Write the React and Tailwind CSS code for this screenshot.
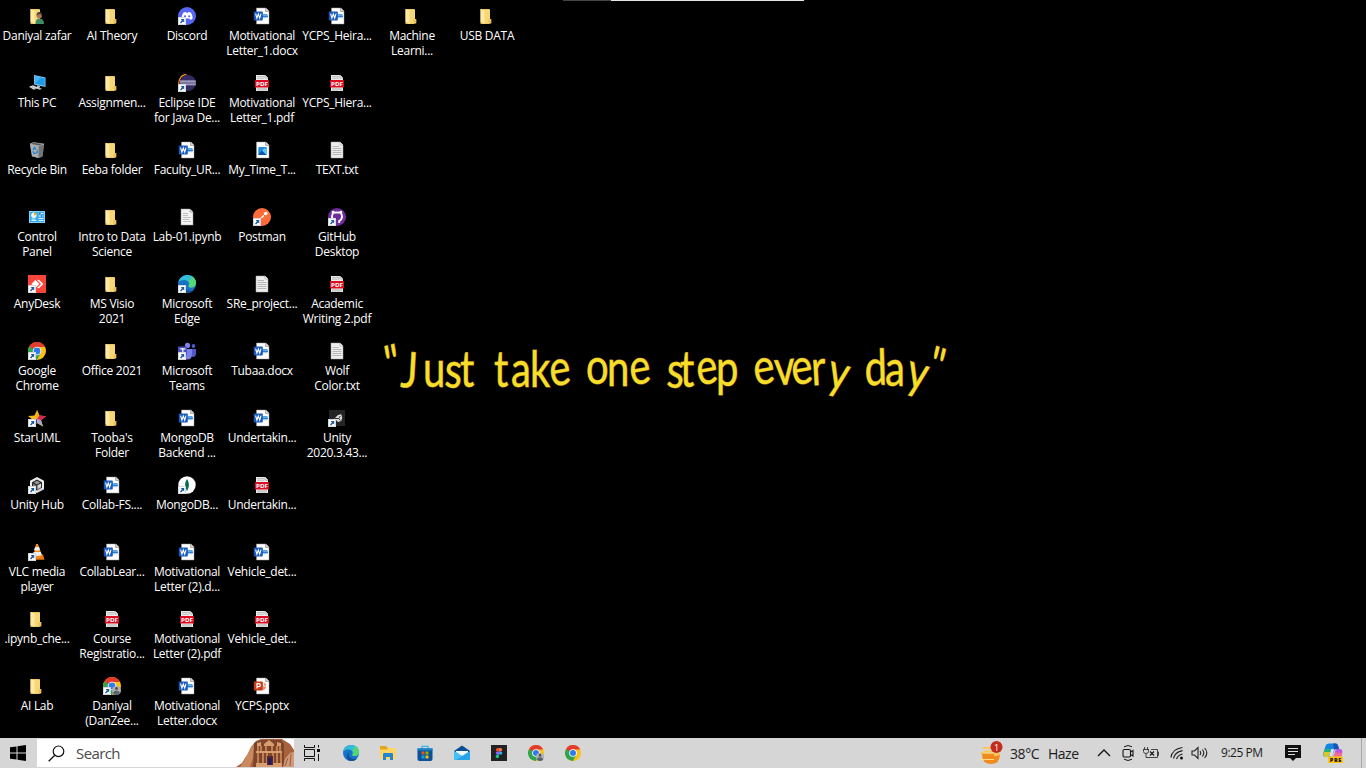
import React from "react";

const Svg = ({ children, className = "h-[18px] w-[18px]", box = "0 0 18 18" }) => (
  <svg viewBox={box} className={`block shrink-0 ${className}`}>
    {children}
  </svg>
);

const Shortcut = () => (
  <g>
    <rect x="0" y="10" width="8" height="8" fill="#fff" />
    <rect x="0.4" y="10.4" width="7.2" height="7.2" fill="none" stroke="#b9c0c8" strokeWidth="0.6" />
    <path d="M2.6 12h3.6v3.6L5 14.4 3 16.6 2 15.8 3.9 13.3z" fill="#1f5aa0" />
  </g>
);

const FolderShape = () => (
  <g>
    <path d="M2.5 2h9v15h-9z" fill="#e9b94f" />
    <path d="M6 2.5h6v9.500h1.2v4.6H6z" fill="#f7d774" />
    <path d="M10.5 12.3h2.7v3.4h-2.7z" fill="#edbf58" />
    <path d="M2.5 2 6.5 3.2V17L2.5 15.2z" fill="#fde9a6" />
  </g>
);

const ChromeShape = () => (
  <g>
    <circle cx="9" cy="9" r="9" fill="#fbc116" />
    <path d="M1.2 4.5A9 9 0 0 1 16.8 4.5L17 5H9L5 10.8z" fill="#e33b2e" />
    <path d="M1.2 4.5A9 9 0 0 0 8.8 18l4-7H5z" fill="#2da44e" />
    <path d="M1.2 4.5 5.1 11.2 9 9z" fill="#2da44e" />
    <circle cx="9" cy="9" r="4.3" fill="#fff" />
    <circle cx="9" cy="9" r="3.4" fill="#2f7cf0" />
  </g>
);

const Avatar = () => (
  <g>
    <circle cx="13.5" cy="13.5" r="4.5" fill="#aab2b9" />
    <path d="M9.900 16.2q.7-2.400 3.600-2.400t3.600 2.400q-3.400 3.400-7.200 0z" fill="#59636e" />
    <circle cx="13.500" cy="12" r="1.500" fill="#8a6656" />
    <path d="M12 11.600q1.500-2.800 3 0z" fill="#2f2f34" />
  </g>
);

const EdgeShape = () => (
  <g>
    <circle cx="9" cy="9" r="9" fill="#1773c8" />
    <path d="M.3 7.6C1.4 2.3 6-.2 10 .1c5 .3 8 4 8 7.7 0 3-2 4.7-5 4.7-2.500 0-3-1.200-2.200-2.300C12 7.500 9 4.500 5.200 5 2.500 5.300.8 6.600.3 7.600z" fill="#31bcdc" />
    <path d="M13 1.200c3.200 1.400 5 3.800 5 6.600 0 3-2 4.700-5 4.700-2.500 0-3-1.200-2.200-2.300 1-2 .8-3.400-.3-4.600C12 5 13.500 4 13 1.200z" fill="#5bdc5e" opacity="0.85" />
    <path d="M6.500 8.300C5.200 13 9 17.600 16 14.800 13.800 18 9.800 18.600 7.200 17.600 3.800 16.200 3.500 10.500 6.500 8.300z" fill="#124f98" />
  </g>
);

const DocPage = ({ x = 3.500 }) => (
  <g>
    <path d={`M${x} 1H13l3 3v13H${x}z`} fill="#fff" stroke="#9a9a9a" strokeWidth="0.5" />
    <path d="M12.600 1v3.400H16" fill="#ddd" stroke="#777" strokeWidth="0.6" />
  </g>
);

const icons = {
  folder: <FolderShape />,
  user: (
    <g>
      <FolderShape />
      <path d="M7.500 17q0-5 3.600-5.400Q16 12 16 17z" fill="#3f8b67" />
      <circle cx="11.300" cy="8.800" r="2.600" fill="#a9795b" />
      <path d="M8.600 9q-.4-4 2.700-4t2.700 4l-1.100-1.600-2.900-.2z" fill="#4c4033" />
    </g>
  ),
  pc: (
    <g>
      <path d="M6 1 17.500 3.500V13L6 10.500z" fill="#8ed2f7" />
      <path d="M6.700 2 16.800 4.200v7.800L6.700 9.800z" fill="#1e9bea" />
      <path d="M6.700 2 13 3.400 6.700 9.800z" fill="#45b5f5" />
      <path d="m9 11.300 3 .8-.4 1.800 2.400.7-2 1.200-4.500-1.200 1.300-.7z" fill="#b7c1c8" />
      <path d="m1 12.800 4-1.500 4.800 2.200-4 2.200z" fill="#e5e8ea" />
      <path d="m2.500 12.900 5 2.100M4 12.300l4.500 2" stroke="#88949d" strokeWidth="0.5" />
    </g>
  ),
  bin: (
    <g>
      <path d="M2 3 5.500 1.500 16 3 14.500 15.500 10.500 17 4 15.300z" fill="#929699" />
      <path d="M2 3 10.800 4.800 10.500 17 4 15.300z" fill="#aaaeb1" />
      <path d="M10.800 4.800 16 3 14.500 15.500 10.500 17z" fill="#707477" />
      <path d="M2 3 5.500 1.500 16 3l-5.200 1.800z" fill="#55595c" stroke="#c4c8cb" strokeWidth="0.5" />
      <path d="m5 9 1.500-2.500L8 8.500M5 10.300l1 2h1.600M9 9.300l.3 2-1.200 1.200" fill="none" stroke="#1d83d8" strokeWidth="1.300" />
    </g>
  ),
  control: (
    <g>
      <path d="M1 3h16v12H1z" fill="#7fd1f8" />
      <path d="M2 4h14v10H2z" fill="#36a9e8" />
      <circle cx="5.900" cy="7.300" r="2.700" fill="#e8f8ff" />
      <path d="M5.900 7.300V4.600a2.700 2.700 0 0 1 2.700 2.700z" fill="#f5a623" />
      <path d="M10.500 5.500h5M10.500 8h5M10.500 10.500h5M3.500 11h4M3.500 12.500h5M10.500 12.500h5" stroke="#d7f3ff" strokeWidth="1" />
      <path d="M11 5.500h1.500M13 8h1.500" stroke="#1267b5" />
    </g>
  ),
  anydesk: (
    <g>
      <path d="M0 0h18v18H0z" fill="#fb453b" />
      <path d="m3.400 9 4-4 4 4-4 4z" fill="#fff" />
      <path d="m9.500 5 4 4-4 4M10.800 5.300 14.500 9l-3.700 3.700" fill="none" stroke="#fff" strokeWidth="1.200" />
      <path d="m9 5.500 3.500 3.500L9 12.500" fill="none" stroke="#fb453b" strokeWidth="0.8" />
      <Shortcut />
    </g>
  ),
  chrome: <g><ChromeShape /><Shortcut /></g>,
  chromeUser: <g><ChromeShape /><Avatar /><Shortcut /></g>,
  star: (
    <g>
      <path d="M9 1 11.400 6.600 18 7.200 13 11.300 15 17.500 9 14 4 17 5 11 0 7 6.500 6.500z" fill="#f5b91c" />
      <path d="M9 1 11.400 6.600 9 10z" fill="#f8a329" />
      <path d="M11.400 6.600 18 7.200 13 11.300 9 10z" fill="#d52652" />
      <path d="M13 11.300 15 17.500 9 14V10z" fill="#aaa9bd" />
      <path d="M9 10v4L5 17l0-6z" fill="#5a36b3" />
      <Shortcut />
    </g>
  ),
  unityHub: (
    <g>
      <path d="M9 1 16 4.700v8.600L9 17 2 13.300V4.700z" fill="#eee" />
      <path d="M9 3.500 14 6.200v5.600L9 14.500 4 11.800V6.200z" fill="#292929" />
      <path d="m9 4.800 3.200 1.800L9 8.400 5.800 6.600z" fill="#999" />
      <path d="m9.600 9.300 3.400-1.800v3.700l-3.400 1.900z" fill="#ddd" />
      <path d="m8.400 9.300-3.400-1.800v3.700l3.400 1.900z" fill="#777" />
      <path d="m9 9.500 7 3.800L9 17z" fill="#b4b4b4" opacity="0.45" />
      <Shortcut />
    </g>
  ),
  vlc: (
    <g>
      <path d="m3 12.500 12-1 1.500 5.300H4z" fill="#e9740b" />
      <path d="m8 1h2l4.500 12.800q-4.500 3.200-9.500 0z" fill="#f48b18" />
      <path d="m7.100 4h3.900l1 3q-3 1.500-6 0zM5.600 9h7.200l1 3q-5 2-9.200 0z" fill="#eee" />
      <Shortcut />
    </g>
  ),
  discord: (
    <g>
      <circle cx="9" cy="9" r="9" fill="#5865f2" />
      <path d="M5.500 5.500 7.800 5l.5.8h1.600l.5-.8 2.300.5c1.500 2 2 4 1.800 6.200-1 .8-1.800 1-2.500 1.100l-.7-1.200H7l-.7 1.200c-1-.2-1.800-.6-2.500-1.100-.2-2.500.5-4.500 1.700-6.200z" fill="#fff" />
      <circle cx="7" cy="9.300" r="1.100" fill="#5865f2" />
      <circle cx="11.200" cy="9.300" r="1.100" fill="#5865f2" />
      <Shortcut />
    </g>
  ),
  eclipse: (
    <g>
      <path d="M8.500.3Q.8 1.500.7 10" fill="none" stroke="#f59018" strokeWidth="1.300" />
      <circle cx="9.900" cy="9" r="8" fill="#332b62" />
      <path d="M2 6.500h15.600l.3 1.200H1.900zM1.900 8.400H18v1.200H1.900zM2 10.300h15.800v1H2.300z" fill="#c6c4de" />
      <Shortcut />
    </g>
  ),
  word: (
    <g>
      <DocPage />
      <path d="M9 7h5.500v1.500H9z" fill="#4ba7e7" />
      <path d="M9 8.500h6v1.500H9z" fill="#2b7cd3" />
      <path d="M9 10h5.500v1.200H9z" fill="#a3c8ef" />
      <rect x="0.800" y="4.500" width="9" height="9" rx="0.800" fill="#185abd" />
      <path d="m2.600 6.700 1.300 4.500 1.400-4.200 1.400 4.200L8 6.700" fill="none" stroke="#fff" strokeWidth="1.100" />
    </g>
  ),
  ppt: (
    <g>
      <DocPage />
      <path d="M9.500 5.500a3.700 3.700 0 1 1 0 7.400z" fill="#f18e70" />
      <path d="M10.500 5.500v3.600h3.600" fill="none" stroke="#fff" strokeWidth="0.800" />
      <rect x="0.800" y="4.500" width="9" height="9" rx="0.800" fill="#c43e1c" />
      <path d="M4 11.600V6.700h1.700q1.700 0 1.700 1.500t-1.700 1.500H4" fill="none" stroke="#fff" strokeWidth="1.200" />
    </g>
  ),
  pdf: (
    <g>
      <path d="M3 1h9l3 3v13H3z" fill="#ececec" />
      <path d="M4 2.500h7M4 4.200h7M4 14.800h10M4 16h10" stroke="#aaa" strokeWidth="0.700" />
      <path d="M12 1v3h3" fill="#fff" stroke="#777" strokeWidth="0.500" />
      <rect x="2" y="6" width="14" height="7.500" rx="0.600" fill="#dc0b20" />
      <text x="3" y="11.600" fontSize="5.200" fontWeight="700" fontFamily="Open Sans, sans-serif" fill="#fff" textLength="12" lengthAdjust="spacingAndGlyphs">PDF</text>
    </g>
  ),
  image: (
    <g>
      <DocPage />
      <rect x="5.300" y="6" width="8.500" height="8" rx="0.800" fill="#238be0" />
      <path d="m5.300 13.500 3.700-4 4.500 4.500H6z" fill="#0e55a7" />
      <path d="m9 9.500 3-2.600 1.800 2.200v4.900z" fill="#66c7f5" />
    </g>
  ),
  txt: (
    <g>
      <path d="M3 1h9l3 3v13H3z" fill="#eee" stroke="#aaa" strokeWidth="0.500" />
      <path d="M12 1v3h3" fill="#fff" stroke="#888" strokeWidth="0.500" />
      <path d="M4.500 5.500h6.500M4.500 7.500h9M4.500 9.500h9M4.500 11.500h9M4.500 13.500h9" stroke="#aaa" strokeWidth="0.800" />
    </g>
  ),
  notebook: (
    <g>
      <path d="M3 1h9l3 3v13H3z" fill="#f3f3f3" stroke="#999" strokeWidth="0.500" />
      <path d="M12 1v3h3" fill="#ddd" stroke="#777" strokeWidth="0.500" />
      <path d="M5 5.500h5M5 7.500h5M5 9.500h8M5 11.500h6M5 13.500h8" stroke="#b5b5b5" strokeWidth="0.800" />
    </g>
  ),
  edge: <g><EdgeShape /><Shortcut /></g>,
  teams: (
    <g>
      <circle cx="9.500" cy="3.400" r="2.600" fill="#7b83eb" />
      <circle cx="15.500" cy="4" r="1.900" fill="#5059c9" />
      <path d="M12 7h6v5.500q-1 3-4 2.500z" fill="#5059c9" />
      <path d="M6 7h8v6q-.5 4.500-4.500 4.500T5 13z" fill="#7b83eb" />
      <rect x="0" y="4.500" width="9" height="9" rx="0.800" fill="#4b53bc" />
      <path d="M2.300 6.800h5M4.800 6.800v5" stroke="#fff" strokeWidth="1.200" />
      <Shortcut />
    </g>
  ),
  mongo: (
    <g>
      <circle cx="9" cy="9" r="8.700" fill="#fff" />
      <path d="M9 3Q13 9 9 14.500 5 9 9 3z" fill="#10744e" />
      <path d="M9 4v11" stroke="#0b5238" strokeWidth="0.500" />
      <Shortcut />
    </g>
  ),
  postman: (
    <g>
      <circle cx="9" cy="9" r="9" fill="#ff6c37" />
      <path d="m5 12 5-4.500 1.200 1.300z" fill="#fff" />
      <circle cx="12.800" cy="5.500" r="1.800" fill="#fff" />
      <path d="m7 11 5-5M5 12.500h3" stroke="#fff" strokeWidth="1" />
      <Shortcut />
    </g>
  ),
  github: (
    <g>
      <circle cx="9" cy="9" r="9" fill="#6e2c9d" />
      <path d="M6.800 15v-2.200Q4 12 4 8.600 4 7 4.800 6L4.700 3.700 7 4.700q2-.5 4 0l2.300-1L13.200 6q.8 1 .8 2.600 0 3.400-2.800 4.200V15" fill="none" stroke="#fff" strokeWidth="1.900" strokeLinejoin="round" />
      <Shortcut />
    </g>
  ),
  unity: (
    <g>
      <path d="M1 1h16v16H1z" fill="#242424" />
      <path d="m6.500 9.500 3.500-3.500 3.200-.8 1 3.300-1 3.500-3.200 1z" fill="#ddd" />
      <path d="M7 9.500h3.800M10.800 9.500l1.500-2.500M10.800 9.500l1.500 2" fill="none" stroke="#333" strokeWidth="1" />
      <Shortcut />
    </g>
  ),
};

const columns = [
  [
    ["user", "Daniyal zafar"],
    ["pc", "This PC"],
    ["bin", "Recycle Bin"],
    ["control", "Control", "Panel"],
    ["anydesk", "AnyDesk"],
    ["chrome", "Google", "Chrome"],
    ["star", "StarUML"],
    ["unityHub", "Unity Hub"],
    ["vlc", "VLC media", "player"],
    ["folder", ".ipynb_che..."],
    ["folder", "AI Lab"],
  ],
  [
    ["folder", "AI Theory"],
    ["folder", "Assignmen..."],
    ["folder", "Eeba folder"],
    ["folder", "Intro to Data", "Science"],
    ["folder", "MS Visio", "2021"],
    ["folder", "Office 2021"],
    ["folder", "Tooba's", "Folder"],
    ["word", "Collab-FS...."],
    ["word", "CollabLear..."],
    ["pdf", "Course", "Registratio..."],
    ["chromeUser", "Daniyal", "(DanZee..."],
  ],
  [
    ["discord", "Discord"],
    ["eclipse", "Eclipse IDE", "for Java De..."],
    ["word", "Faculty_UR..."],
    ["notebook", "Lab-01.ipynb"],
    ["edge", "Microsoft", "Edge"],
    ["teams", "Microsoft", "Teams"],
    ["word", "MongoDB", "Backend ..."],
    ["mongo", "MongoDB..."],
    ["word", "Motivational", "Letter (2).d..."],
    ["pdf", "Motivational", "Letter (2).pdf"],
    ["word", "Motivational", "Letter.docx"],
  ],
  [
    ["word", "Motivational", "Letter_1.docx"],
    ["pdf", "Motivational", "Letter_1.pdf"],
    ["image", "My_Time_T..."],
    ["postman", "Postman"],
    ["txt", "SRe_project..."],
    ["word", "Tubaa.docx"],
    ["word", "Undertakin..."],
    ["pdf", "Undertakin..."],
    ["word", "Vehicle_det..."],
    ["pdf", "Vehicle_det..."],
    ["ppt", "YCPS.pptx"],
  ],
  [
    ["word", "YCPS_Heira..."],
    ["pdf", "YCPS_Hiera..."],
    ["txt", "TEXT.txt"],
    ["github", "GitHub", "Desktop"],
    ["pdf", "Academic", "Writing 2.pdf"],
    ["txt", "Wolf", "Color.txt"],
    ["unity", "Unity", "2020.3.43..."],
  ],
  [["folder", "Machine", "Learni..."]],
  [["folder", "USB DATA"]],
];

function DesktopIcon({ item }) {
  const [icon, ...lines] = item;
  return (
    <div className="flex h-[67px] w-[74px] flex-col items-center pt-[7px]">
      <Svg>{icons[icon]}</Svg>
      <div className="flex flex-col items-center pt-[3px] text-[12px] leading-[15px] tracking-[-0.28px] text-white">
        {lines.map((line) => (
          <span key={line} className="whitespace-nowrap">{line}</span>
        ))}
      </div>
    </div>
  );
}

function Quote() {
  return (
    <svg viewBox="0 0 580 100" className="mt-[326px] ml-[1px] block h-[100px] w-[580px] self-start overflow-visible">
      <g transform="scale(1 1.24)" fill="#f6df28" stroke="#b9791c" strokeWidth="0.8" paintOrder="stroke" fontFamily="Lato, sans-serif" fontSize="40">
        <text y="45 49 49 49 49" x="12 24 47 68 84" rotate="-12 4 0 4 0">"Just</text>
        <text y="49" x="118 135 154 175" rotate="0 0 0 -8">take</text>
        <text y="47 48 48" x="210 231 255" rotate="0 0 -8">one</text>
        <text y="49 49 48 48" x="290 304 322 340" rotate="4 0 -8 0">step</text>
        <text y="48" x="379 399 417 436 450" rotate="-8 -4 -8 -4 14">every</text>
        <text y="48 48 48 43" x="489 509 529 550" rotate="-2 0 14 16">day"</text>
      </g>
    </svg>
  );
}

const Petra = () => (
  <Svg box="0 0 58 28" className="h-7 w-[58px]">
    <path d="M0 28 6 24 9 19 12 15 15 8 20 2 25 0h21l8 5 4 6v17z" fill="#a7623c" />
    <path d="M8 22 15 8l5-6-2 14-4 12H4z" fill="#c98a60" />
    <path d="M18 4 24 1h21l3 4v23H17z" fill="#7d452b" />
    <path d="M20 12h26v2H20zM20 24h26v4H20zM21 4l4-1v4h-4zM28 5l5-4 5 4v2H28zM41 3l4 1v3h-4z" fill="#d99d70" />
    <path d="M22 7v5M25 7v5M30 7v5M36 7v5M41 7v5M44 7v5M22 14v10M27 14v10M31 14v10M37 14v10M41 14v10M45 14v10" stroke="#c98455" strokeWidth="1.800" />
    <path d="M31 17h6v9h-6z" fill="#532a32" />
    <path d="M32.500 19h3v7h-3z" fill="#211963" />
    <path d="m47 28 2-8 5-6 4-1v15z" fill="#d39a79" />
    <path d="m49 27 3-8M54 27l1-12" stroke="#935b43" />
  </Svg>
);

const StoreIcon = () => (
  <Svg className="h-4 w-4" box="0 0 16 16">
    <path d="M5 4V1.300h6V4" fill="none" stroke="#37b5ed" strokeWidth="1.300" />
    <path d="M.5 3.500h15V14q0 2-2 2h-11q-2 0-2-2z" fill="#0d4f98" />
    <path d="M.5 3.500h15v2H.5z" fill="#1685c8" />
    <path d="M4.500 6.500h3v3h-3z" fill="#f25022" />
    <path d="M8.500 6.500h3v3h-3z" fill="#7fba00" />
    <path d="M4.500 10.500h3v3h-3z" fill="#00a4ef" />
    <path d="M8.500 10.500h3v3h-3z" fill="#ffb900" />
  </Svg>
);

const ExplorerIcon = () => (
  <Svg className="h-4 w-4" box="0 0 16 16">
    <path d="M0 1h6l1.500 2H15v5H0z" fill="#e5a51c" />
    <path d="M0 4.500h7L8.500 3H16v11H0z" fill="#fdd663" />
    <path d="M3 14V9q0-1 1-1h8q1 0 1 1v6h-3v-3H6v3H3z" fill="#2384d4" />
  </Svg>
);

const MailIcon = () => (
  <Svg className="h-4 w-4" box="0 0 16 16">
    <path d="M0 6 8 .5 16 6v9H0z" fill="#0b4d91" />
    <path d="M2 6h12v5H2z" fill="#eff7fc" />
    <path d="m0 6 8 5 8-5v9H0z" fill="#27a4e9" />
    <path d="m0 6 8 5L2 15H0z" fill="#46c1f4" />
  </Svg>
);

const FigmaIcon = () => (
  <Svg className="h-4 w-4" box="0 0 16 16">
    <rect width="16" height="16" fill="#222" />
    <path d="M8 3H6.500a1.700 1.700 0 0 0 0 3.400H8z" fill="#f24e1e" />
    <path d="M8 3h1.500a1.700 1.700 0 0 1 0 3.400H8z" fill="#ff7262" />
    <path d="M8 6.400H6.500a1.700 1.700 0 0 0 0 3.400H8z" fill="#a259ff" />
    <circle cx="9.600" cy="8.100" r="1.700" fill="#1abcfe" />
    <path d="M8 9.800H6.500a1.700 1.700 0 1 0 1.500 1.700z" fill="#0acf83" />
  </Svg>
);

const TaskViewIcon = () => (
  <Svg className="h-4 w-[17px]" box="0 0 17 16">
    <path d="M1.500 0v2.500h10V0M1.500 16v-2.500h10V16M1.500 4.500h10v7h-10zM15.500 0v2.500M15.500 9v7" fill="none" stroke="#111" strokeWidth="1" />
    <path d="M14 4h3v3h-3z" fill="#111" />
  </Svg>
);

const WeatherIcon = () => (
  <Svg className="h-6 w-6" box="0 0 24 24">
    <path d="M3 13h18q0 10-9 10T3 13z" fill="#f18b20" />
    <path d="M3.500 6h10v1.800h-10zM5 9.500h11v2H5zM0 15h17q4 0 4-3H8v-1H2v2h13v2H0z" fill="#fbc654" />
    <path d="M1 18h14v1H1z" fill="#ffdd82" />
    <circle cx="17.500" cy="6" r="6" fill="#c42b1c" />
    <text x="15" y="9.500" fontSize="9" fontFamily="Open Sans, sans-serif" fill="#fff">1</text>
  </Svg>
);

const MeetIcon = () => (
  <Svg className="h-4 w-3" box="0 0 12 16">
    <path d="M2 1.800Q6-.8 10 1.800M2 14.200q4 2.600 8 0" fill="none" stroke="#151515" />
    <rect x="1" y="4.500" width="7.500" height="7.500" rx="1.200" fill="none" stroke="#151515" strokeWidth="1.100" />
    <path d="m8.500 7 2.500-1.500v5.500L8.500 9.500" fill="none" stroke="#151515" strokeWidth="1.100" />
  </Svg>
);

const BatteryIcon = () => (
  <Svg className="h-4 w-4" box="0 0 16 16">
    <path d="M0 4.500h6M1.500 2v2.500M4.500 2v2.500M.5 4.500v2q0 2 2.500 2t2.500-2v-2M3 8.500v4h11.500v-8H8M14.500 7h1v3.500h-1" fill="none" stroke="#333" strokeWidth="0.900" />
    <path d="m7 6.500 4 4M11 6.500l-4 4" stroke="#111" strokeWidth="1.100" />
  </Svg>
);

const WifiIcon = () => (
  <Svg className="h-[14px] w-[14px]" box="0 0 14 14">
    <path d="M1 11.500Q2 3 12.500 1.500M3.500 12.500Q5 6 12.500 4.700M6.500 13Q8 9 12.500 8" fill="none" stroke="#222" strokeWidth="1.200" />
    <circle cx="11.500" cy="12" r="1.500" fill="#111" />
  </Svg>
);

const SpeakerIcon = () => (
  <Svg className="h-[14px] w-[18px]" box="0 0 18 14">
    <path d="M1 5h2.500L7 1.500v11L3.500 9H1zM9 5q1.500 2 0 4M11.300 3.500q3 3.500 0 7M13.600 2q4.500 5 0 10" fill="none" stroke="#222" strokeWidth="1.100" />
  </Svg>
);

const NotificationIcon = () => (
  <Svg className="h-4 w-4" box="0 0 16 16">
    <path d="M0 0h16v13h-5l-3 3-3-3H0z" fill="#111" />
    <path d="M3 3.500h10M3 6.500h10M3 9.500h7" stroke="#ddd" strokeWidth="1" />
  </Svg>
);

const CopilotIcon = () => (
  <Svg className="h-5 w-5" box="0 0 20 20">
    <path d="M5.500.5h7q2 0 2.500 2l1 3.500h-3q-1.500 0-2 2l-1.600 4.500q-.6 1.500-2.400 1.500H3q-3.500 0-2.500-4L2.500 3q.7-2.500 3-2.500z" fill="#1683df" />
    <path d="M1.700 6h6.600l-1.800 6q-.5 2-2 2H3q-3.500 0-2.500-4z" fill="#28af72" />
    <path d="M.8 9h6.500l-.8 3q-.5 2-2 2H3Q-.5 14 .8 9z" fill="#d9c632" />
    <path d="M10 .5h2.500q2 0 2.500 2l1 3.500h-3q-1 0-1.500 1z" fill="#1752b9" />
    <path d="M8.300 6h2.900L9 13.500H6.200z" fill="#d9e4ec" />
    <path d="M13.500 6h3q3.500 0 2.800 3.500l-1 4H9.500q1.500-.5 2-2.500l1-4q.2-.8 1-1z" fill="#bb54e4" />
    <path d="m12 9.500 7.200.5-.9 3.500H9.500q1.500-.5 2-2.500z" fill="#f56b8c" />
    <rect x="5" y="13.500" width="15" height="6.500" rx="1" fill="#ffc50a" />
    <text x="6.800" y="18.900" fontSize="5.600" fontWeight="800" fontFamily="Open Sans, sans-serif" fill="#111" textLength="11.500">PRE</text>
  </Svg>
);

function Taskbar() {
  return (
    <footer className="flex h-[30px] items-center bg-[#d6d6d6] text-[#1b1b1b]">
      <div className="flex w-[37px] justify-center pr-px">
        <Svg className="h-4 w-4" box="0 0 16 16">
          <path d="M0 2.300 6.500 1.400v6.100H0zM7.500 1.200 16 0v7.500H7.500zM0 8.500h6.500v6.100L0 13.700zM7.500 8.500H16V16l-8.500-1.200z" />
        </Svg>
      </div>
      <div className="flex h-7 w-[257px] items-center bg-white pl-[11px]">
        <Svg className="h-[17px] w-[17px]" box="0 0 17 17">
          <circle cx="10.500" cy="6.300" r="5.300" fill="none" stroke="#111" strokeWidth="1.200" />
          <path d="M6.800 10.200.7 16.300" stroke="#111" strokeWidth="1.300" />
        </Svg>
        <span className="ml-[11px] text-[15px] tracking-[-0.6px] text-[#4a4a4a]">Search</span>
        <div className="ml-auto"><Petra /></div>
      </div>
      <div className="ml-[9px]"><TaskViewIcon /></div>
      <div className="ml-[23px] flex items-center gap-[21px]">
        <Svg className="h-4 w-4"><EdgeShape /></Svg>
        <ExplorerIcon />
        <StoreIcon />
        <MailIcon />
        <FigmaIcon />
        <Svg className="h-4 w-4"><ChromeShape /><Avatar /></Svg>
        <Svg className="h-4 w-4"><ChromeShape /></Svg>
      </div>
      <div className="ml-auto flex h-full items-center">
        <WeatherIcon />
        <span className="ml-[7px] w-[38px] whitespace-nowrap text-[14px] tracking-[-0.4px]">38°C</span>
        <span className="w-[49px] text-[14px] tracking-[-0.5px]">Haze</span>
        <Svg className="h-[8px] w-[14px]" box="0 0 14 8">
          <path d="m1 7 6-6 6 6" fill="none" stroke="#111" strokeWidth="1.300" />
        </Svg>
        <div className="ml-[11px]"><MeetIcon /></div>
        <div className="ml-[9px]"><BatteryIcon /></div>
        <div className="ml-[11px]"><WifiIcon /></div>
        <div className="ml-[7px]"><SpeakerIcon /></div>
        <span className="ml-[12px] w-[64px] whitespace-nowrap text-[12px] tracking-[-0.45px]">9:25 PM</span>
        <NotificationIcon />
        <div className="ml-[22px]"><CopilotIcon /></div>
        <div className="ml-[18px] h-full w-[5px] border-l border-[#aaa]" />
      </div>
    </footer>
  );
}

export default function App() {
  return (
    <main className="flex h-[768px] w-[1366px] flex-col overflow-hidden bg-black font-['Open_Sans','Noto_Sans',sans-serif]">
      <div className="flex h-px shrink-0 pl-[563px]">
        <div className="w-12 bg-[#444]" />
        <div className="w-[193px] bg-[#e6e6e6]" />
      </div>
      <section className="-mt-px flex h-[738px] shrink-0">
        {columns.slice(0, 5).map((column, index) => (
          <div key={index} className="w-[75px] shrink-0">
            {column.map((item, row) => <DesktopIcon key={row} item={item} />)}
          </div>
        ))}
        <div className="flex w-[990px] flex-col">
          <div className="flex h-[67px]">
            {columns.slice(5).map((column, index) => (
              <div key={index} className="w-[75px]">
                <DesktopIcon item={column[0]} />
              </div>
            ))}
          </div>
          <div className="-mt-[67px]"><Quote /></div>
        </div>
      </section>
      <Taskbar />
    </main>
  );
}
